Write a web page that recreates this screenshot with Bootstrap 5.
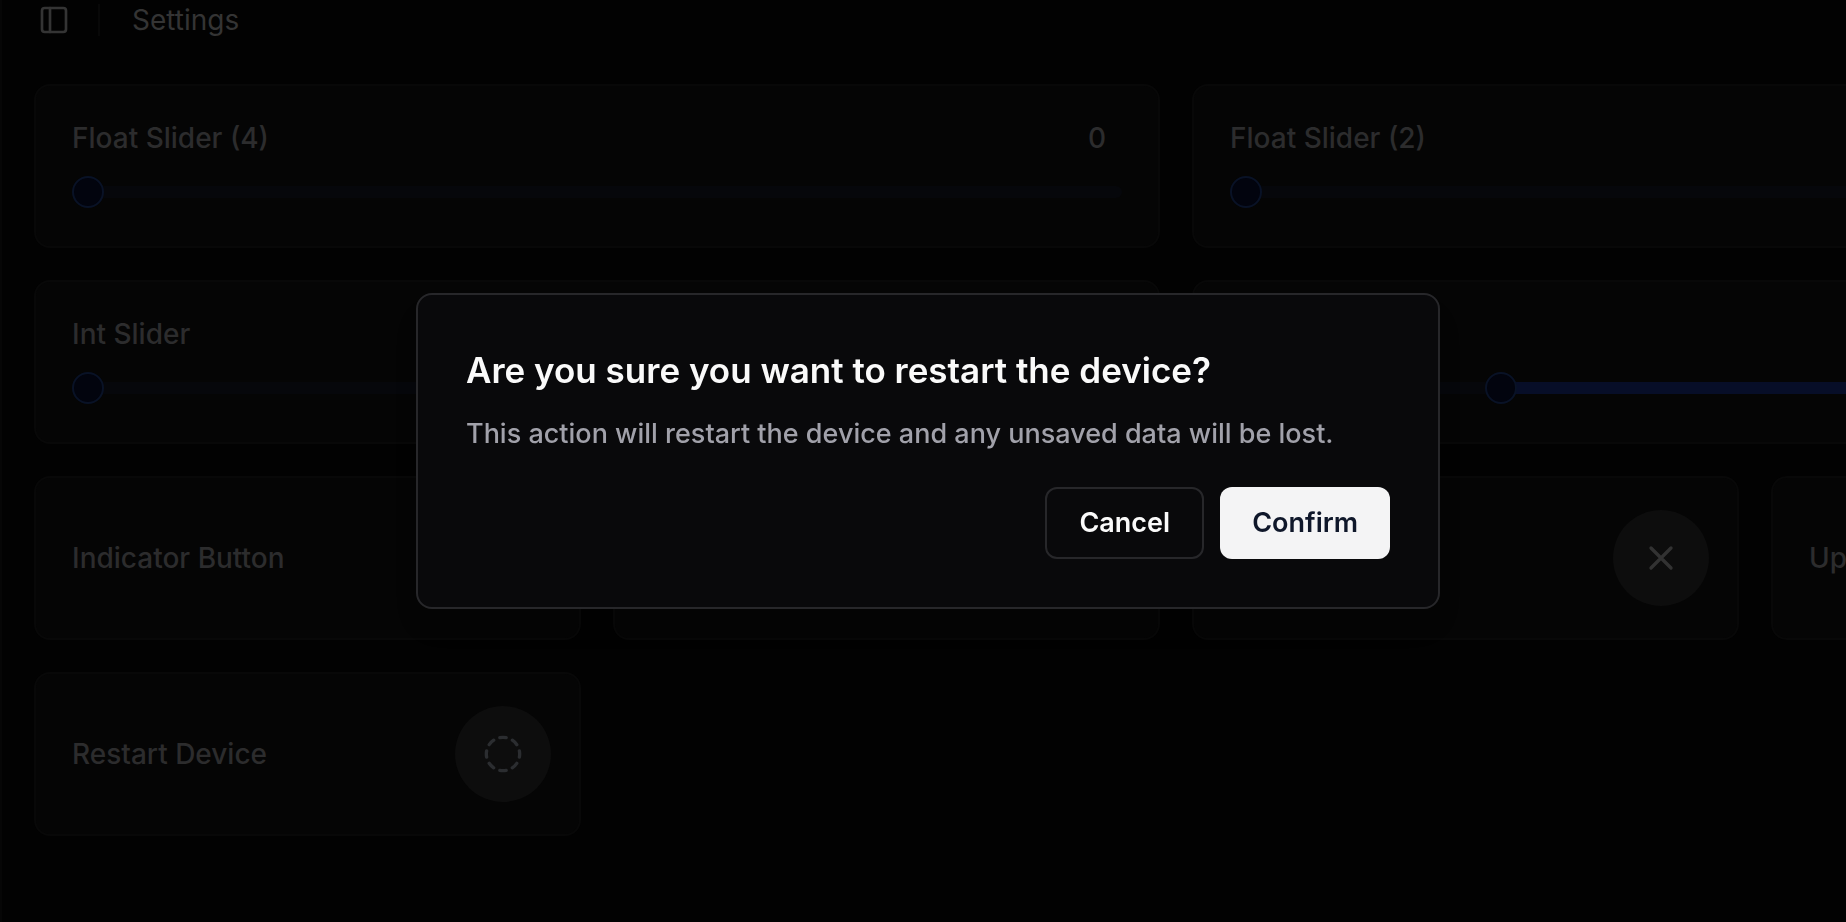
<!DOCTYPE html>
<html lang="en" data-bs-theme="dark">
<head>
<meta charset="utf-8">
<meta name="viewport" content="width=device-width, initial-scale=1">
<title>Settings</title>
<link href="https://cdn.jsdelivr.net/npm/bootstrap@5.3.0/dist/css/bootstrap.min.css" rel="stylesheet">
<style>
  body { background: #020202; color: #2c2c2d; font-family: Inter, sans-serif; font-size: 28px; line-height: 32px; overflow: hidden; }
  .page-shell { border-left: 2px solid #060606; min-height: 100vh; overflow: hidden; }
  .page-header { padding: 4px 36px 16px; color: #343434; }
  .header-rule { width: 2px; height: 32px; background: #080808; margin: 0 32px 0 28px; }
  .icon-plain { background: none; border: 0; padding: 0; color: inherit; display: flex; }
  .panel-grid { display: grid; grid-template-columns: repeat(4, 1fr); gap: 32px; width: calc(124vw - 5px); margin: 32px; }
  .span-two { grid-column: span 2; }
  .tile { border: 2px solid #080808; border-radius: 16px; background: #050505; min-height: 164px; font-weight: 500; }
  .slider-tile { padding: 36px 36px 38px; }
  .slider-tile .tile-head { min-height: 32px; margin-bottom: 22px; padding-right: 16px; }
  .button-tile { padding: 28px 28px 28px 36px; }
  .slider { -webkit-appearance: none; appearance: none; display: block; width: 100%; height: 32px; margin: 0; background: none; }
  .slider::-webkit-slider-runnable-track { height: 12px; border-radius: 6px; background: #06070b; }
  .slider.filled::-webkit-slider-runnable-track { background: linear-gradient(to right, #06070b 25%, #070e28 25%); }
  .slider::-webkit-slider-thumb { -webkit-appearance: none; width: 32px; height: 32px; margin-top: -10px; border-radius: 50%; border: 2px solid #091226; background: #02040e; }
  .round-btn { width: 96px; height: 96px; border: 0; border-radius: 50%; background: #0d0d0d; color: #323232; display: flex; align-items: center; justify-content: center; flex: none; }
  .confirm-layer { padding: 0 0 20px 10px; overflow: hidden; }
  .confirm-layer .modal-dialog { max-width: 1024px; min-height: 100%; margin: 0 auto; }
  .confirm-box { background: #09090b; border: 2px solid #27272a; border-radius: 16px; padding: 48px; box-shadow: 0 20px 30px -6px rgba(0, 0, 0, .1); }
  .confirm-title { font-size: 35px; line-height: 54px; font-weight: 600; color: #fafafa; margin: 0 0 16px; }
  .confirm-text { font-size: 27px; font-weight: 500; line-height: 42px; color: #a1a1aa; margin: 0 0 32px; }
  .confirm-btn { font-size: 27px; line-height: 40px; font-weight: 600; padding: 14px 32px; border: 2px solid #27272a; border-radius: 12px; color: #fafafa; background: #09090b; }
  .confirm-btn.solid { padding: 16px 32px; background: #f4f4f5; border: 0; color: #0f172a; }
</style>
</head>
<body>
<div class="page-shell">
  <header class="page-header d-flex align-items-center">
    <button class="icon-plain" type="button" aria-label="Toggle sidebar">
      <svg width="32" height="32" viewBox="0 0 24 24" fill="none" stroke="currentColor" stroke-width="2" stroke-linecap="round" stroke-linejoin="round"><rect x="3" y="3" width="18" height="18" rx="2"/><path d="M9 3v18"/></svg>
    </button>
    <div class="header-rule"></div>
    <span>Settings</span>
  </header>
  <main class="panel-grid">
    <section class="tile slider-tile span-two">
      <div class="tile-head d-flex justify-content-between"><label for="float4">Float Slider (4)</label><output for="float4">0</output></div>
      <input id="float4" class="slider" type="range" min="0" max="100" value="0">
    </section>
    <section class="tile slider-tile span-two">
      <div class="tile-head d-flex justify-content-between"><label for="float2">Float Slider (2)</label></div>
      <input id="float2" class="slider" type="range" min="0" max="100" value="0">
    </section>
    <section class="tile slider-tile span-two">
      <div class="tile-head d-flex justify-content-between"><label for="int1">Int Slider</label></div>
      <input id="int1" class="slider" type="range" min="0" max="100" value="0">
    </section>
    <section class="tile slider-tile span-two">
      <div class="tile-head"></div>
      <input class="slider filled" type="range" min="0" max="100" value="25" aria-label="Slider">
    </section>
    <section class="tile button-tile d-flex align-items-center justify-content-between"><span>Indicator Button</span></section>
    <section class="tile button-tile"></section>
    <section class="tile button-tile d-flex align-items-center justify-content-end">
      <button class="round-btn" type="button" aria-label="Off">
        <svg width="40" height="40" viewBox="0 0 24 24" fill="none" stroke="currentColor" stroke-width="2" stroke-linecap="round"><path d="M18 6 6 18M6 6l12 12"/></svg>
      </button>
    </section>
    <section class="tile button-tile d-flex align-items-center"><span>Up</span></section>
    <section class="tile button-tile d-flex align-items-center justify-content-between">
      <span>Restart Device</span>
      <button class="round-btn" type="button" aria-label="Restart Device">
        <svg width="40" height="40" viewBox="0 0 24 24" fill="none" stroke="#2b2d30" stroke-width="2" stroke-linecap="round"><path d="M10.1 2.182a10 10 0 0 1 3.8 0M13.9 21.818a10 10 0 0 1-3.8 0M17.609 3.721a10 10 0 0 1 2.69 2.7M2.182 13.9a10 10 0 0 1 0-3.8M20.279 17.609a10 10 0 0 1-2.7 2.69M21.818 10.1a10 10 0 0 1 0 3.8M3.721 6.391a10 10 0 0 1 2.7-2.69M6.391 20.279a10 10 0 0 1-2.69-2.7"/></svg>
      </button>
    </section>
  </main>
</div>

<div class="modal d-block confirm-layer" role="alertdialog" aria-modal="true" aria-labelledby="confirmTitle" aria-describedby="confirmText">
  <div class="modal-dialog modal-dialog-centered">
    <div class="modal-content confirm-box">
      <h2 class="confirm-title" id="confirmTitle">Are you sure you want to restart the device?</h2>
      <p class="confirm-text" id="confirmText">This action will restart the device and any unsaved data will be lost.</p>
      <div class="d-flex justify-content-end gap-3">
        <button class="btn confirm-btn" type="button">Cancel</button>
        <button class="btn confirm-btn solid" type="button">Confirm</button>
      </div>
    </div>
  </div>
</div>
<script src="https://cdn.jsdelivr.net/npm/bootstrap@5.3.0/dist/js/bootstrap.bundle.min.js"></script>
</body>
</html>
